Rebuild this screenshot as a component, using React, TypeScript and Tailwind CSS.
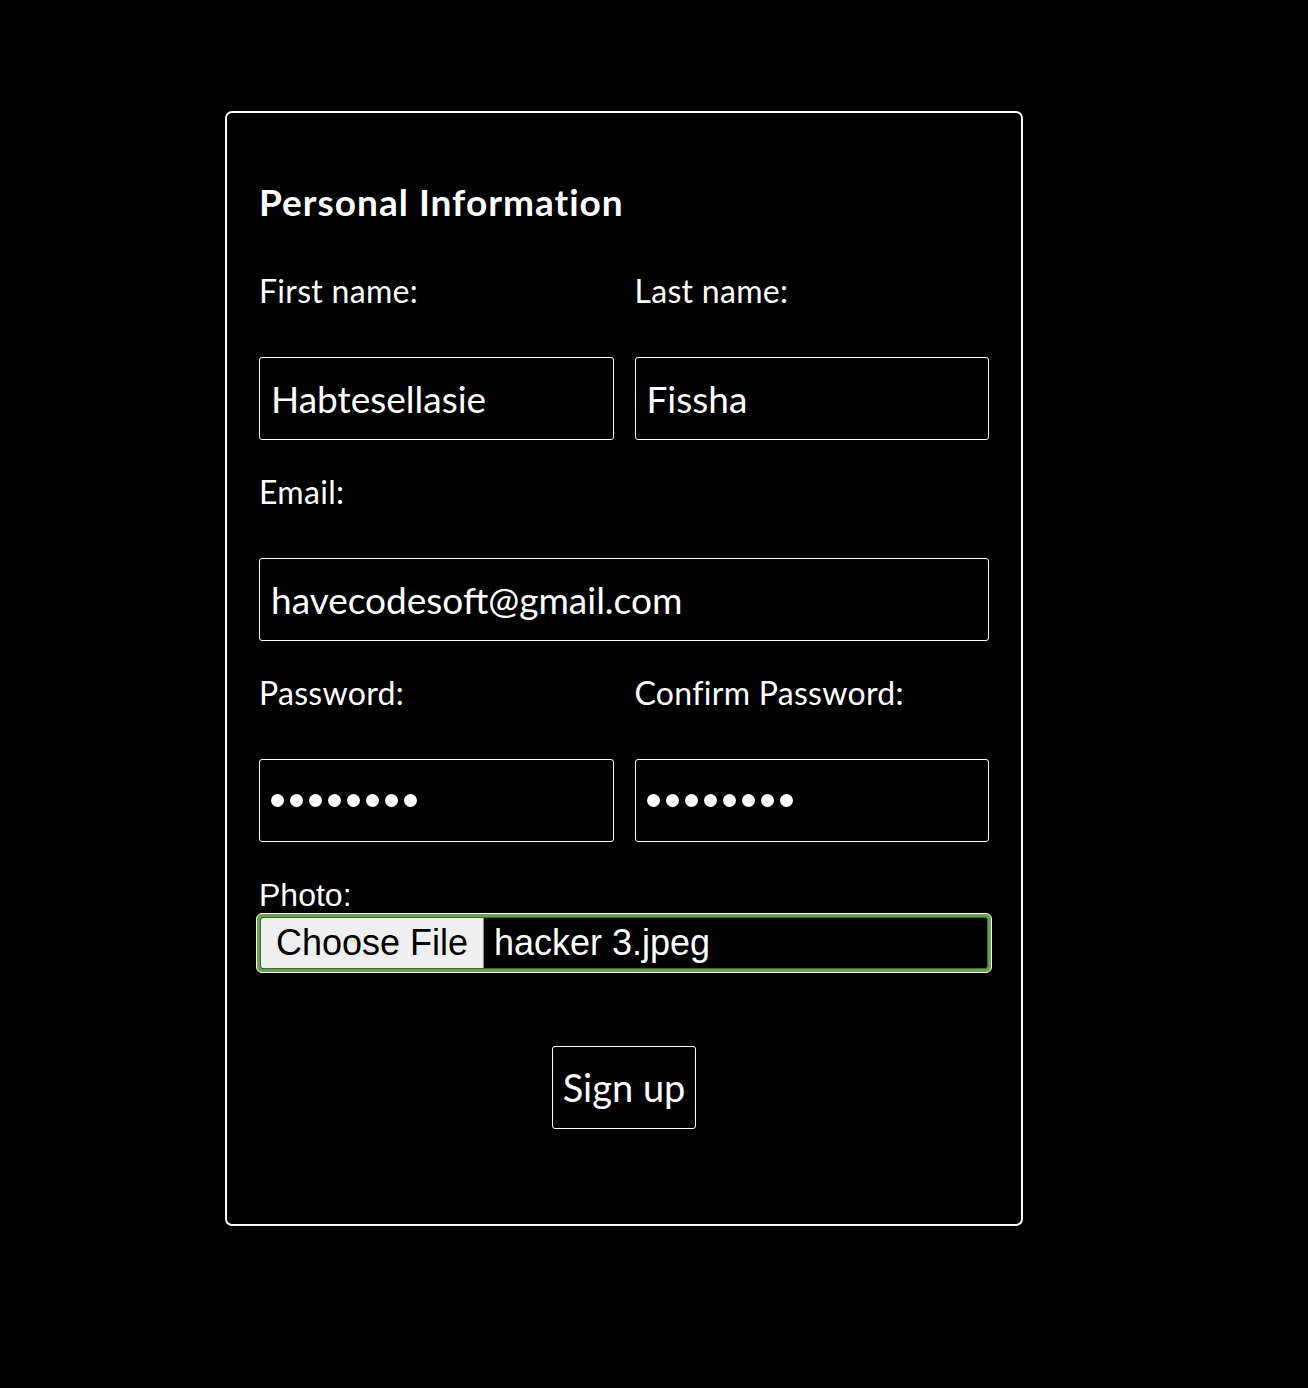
export default function App() {
  const label = "block pt-[34px] pb-[48px] text-[32px] leading-[36px] tracking-[0.3px] text-white"
  const input =
    "w-full h-[83px] rounded-[3px] border border-white bg-black px-[11px] text-[37px] text-white outline-none"

  return (
    <div className="min-h-[1388px] bg-black pt-[111px]" style={{ fontFamily: 'Lato, "Open Sans", sans-serif' }}>
      <div className="ml-[225px] w-[798px] h-[1115px] rounded-[7px] border-2 border-white px-[32px]">
        <h3 className="pt-[66px] mb-[14px] text-[37px] leading-[46px] tracking-[1px] font-bold text-white">
          Personal Information
        </h3>

        <div className="grid grid-cols-2 gap-x-[21px]">
          <div>
            <label className={label}>First name:</label>
            <input className={input} defaultValue="Habtesellasie" />
          </div>
          <div>
            <label className={label}>Last name:</label>
            <input className={input} defaultValue="Fissha" />
          </div>
        </div>

        <div>
          <label className={label}>Email:</label>
          <input className={input} defaultValue="havecodesoft@gmail.com" />
        </div>

        <div className="grid grid-cols-2 gap-x-[21px]">
          <div>
            <label className={label}>Password:</label>
            <div className={input + " flex items-center gap-[6px]"}>
              {Array.from({ length: 8 }).map((_, i) => (
                <span key={i} className="w-[13px] h-[13px] rounded-full bg-white" />
              ))}
            </div>
          </div>
          <div>
            <label className={label}>Confirm Password:</label>
            <div className={input + " flex items-center gap-[6px]"}>
              {Array.from({ length: 8 }).map((_, i) => (
                <span key={i} className="w-[13px] h-[13px] rounded-full bg-white" />
              ))}
            </div>
          </div>
        </div>

        <div className="pt-[34px] text-[32px] leading-[38px] text-white" style={{ fontFamily: '"Liberation Sans", Arial, sans-serif' }}>
          Photo:
        </div>
        <div
          className="-mx-[3px] mt-[-1px] h-[60px] rounded-[6px] border border-white bg-[#6d9e52] p-[3px]"
          style={{ fontFamily: '"Liberation Sans", Arial, sans-serif' }}
        >
          <div className="flex h-full items-stretch rounded-[3px] border border-[#3d6a2a] bg-black overflow-hidden">
            <div className="flex w-[223px] items-center justify-center bg-[#efefef] border-r border-[#8a8a8a] text-[36px] text-black">
              Choose File
            </div>
            <div className="flex items-center pl-[10px] text-[36px] text-white">hacker 3.jpeg</div>
          </div>
        </div>

        <div className="flex justify-center pt-[73px]">
          <button className="h-[83px] w-[144px] rounded-[3px] border border-white bg-black text-[38px] text-white">
            Sign up
          </button>
        </div>
      </div>
    </div>
  )
}
